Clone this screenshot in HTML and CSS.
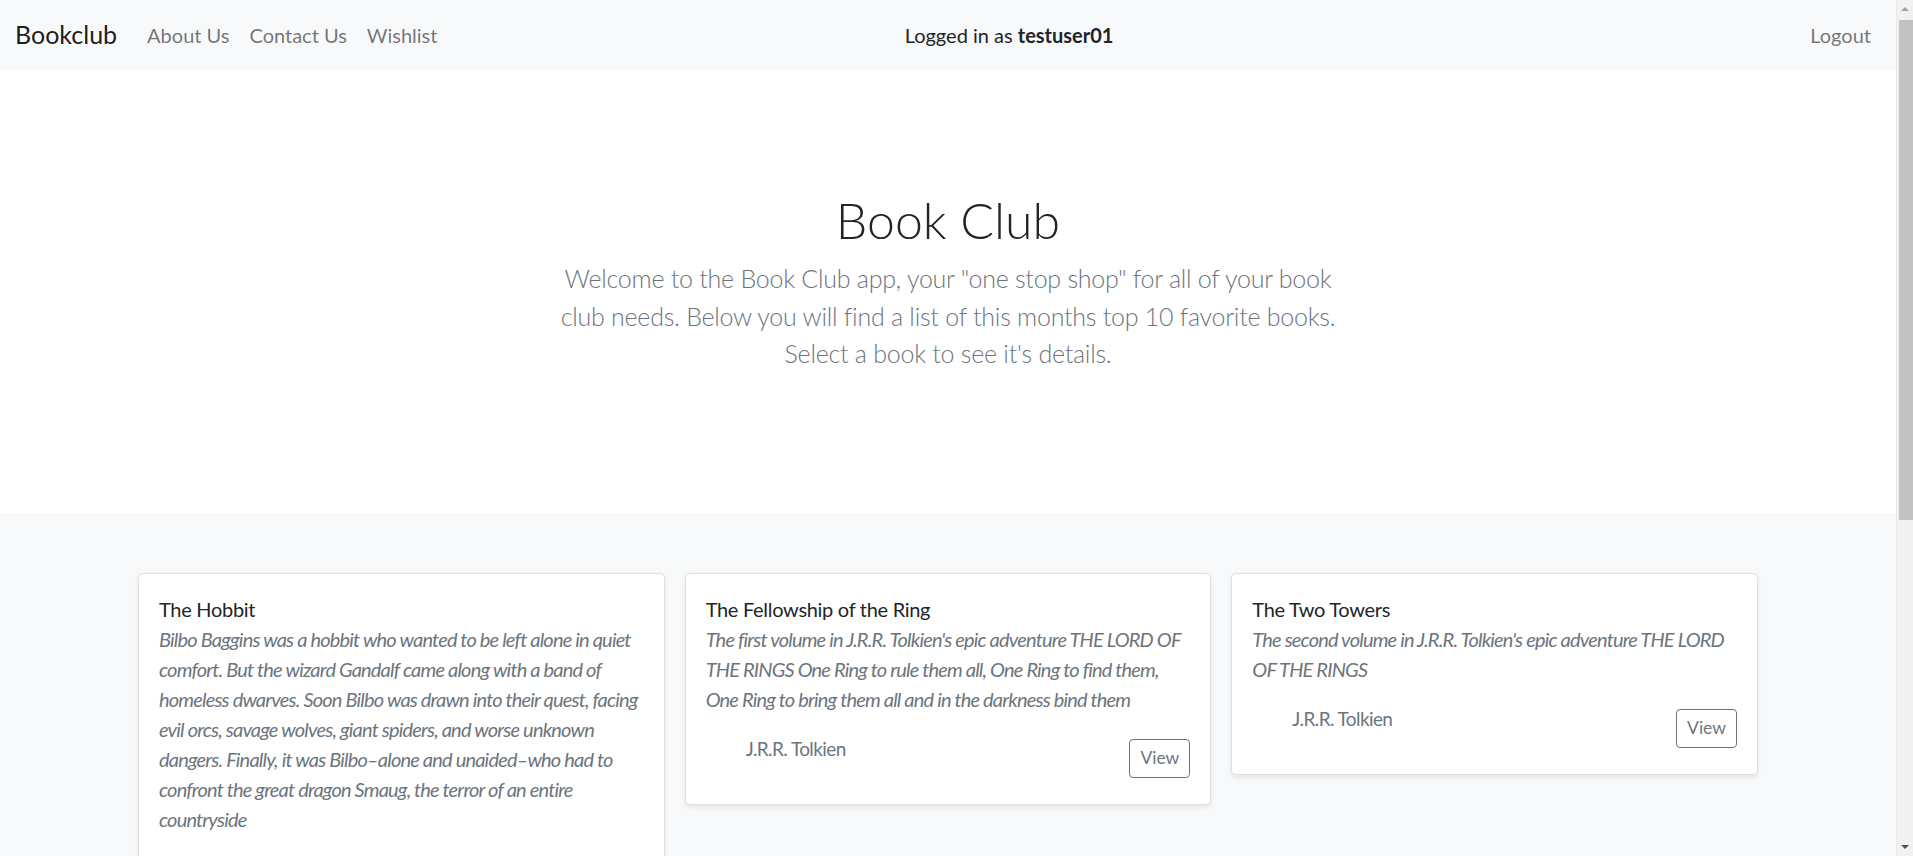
FILE: index.html
```html
<!DOCTYPE html>
<html lang="en">
<head>
<meta charset="utf-8">
<title>Bookclub</title>
<link rel="stylesheet" href="styles.css">
</head>
<body>
<div class="page">
  <nav class="navbar">
    <div class="navbar-inner">
      <a class="brand" href="#">Bookclub</a>
      <div class="collapse">
        <ul class="nav">
          <li><a class="nav-link" href="#">About Us</a></li>
          <li><a class="nav-link" href="#">Contact Us</a></li>
          <li><a class="nav-link" href="#">Wishlist</a></li>
        </ul>
        <span class="navbar-text">Logged in as <b>testuser01</b></span>
        <ul class="nav nav-right">
          <li><a class="nav-link" href="#">Logout</a></li>
        </ul>
      </div>
    </div>
  </nav>

  <section class="hero container">
    <div class="hero-inner">
      <div class="hero-col">
        <h1 class="hero-title">Book Club</h1>
        <p class="lead">Welcome to the Book Club app, your "one stop shop" for all of your book club needs. Below you will find a list of this months top 10 favorite books. Select a book to see it's details.</p>
      </div>
    </div>
  </section>

  <div class="album">
    <div class="container">
      <div class="card-grid">
        <div class="card">
          <div class="card-body">
            <div class="card-title">The Hobbit</div>
            <p class="card-desc">Bilbo Baggins was a hobbit who wanted to be left alone in quiet comfort. But the wizard Gandalf came along with a band of homeless dwarves. Soon Bilbo was drawn into their quest, facing evil orcs, savage wolves, giant spiders, and worse unknown dangers. Finally, it was Bilbo–alone and unaided–who had to confront the great dragon Smaug, the terror of an entire countryside</p>
            <div class="card-foot">
              <ul class="authors"><li>J.R.R. Tolkien</li></ul>
              <button class="btn" type="button">View</button>
            </div>
          </div>
        </div>
        <div class="card">
          <div class="card-body">
            <div class="card-title">The Fellowship of the Ring</div>
            <p class="card-desc">The first volume in J.R.R. Tolkien's epic adventure THE LORD OF THE RINGS One Ring to rule them all, One Ring to find them, One Ring to bring them all and in the darkness bind them</p>
            <div class="card-foot">
              <ul class="authors"><li>J.R.R. Tolkien</li></ul>
              <button class="btn" type="button">View</button>
            </div>
          </div>
        </div>
        <div class="card">
          <div class="card-body">
            <div class="card-title">The Two Towers</div>
            <p class="card-desc">The second volume in J.R.R. Tolkien's epic adventure THE LORD OF THE RINGS</p>
            <div class="card-foot">
              <ul class="authors"><li>J.R.R. Tolkien</li></ul>
              <button class="btn" type="button">View</button>
            </div>
          </div>
        </div>
      </div>
    </div>
  </div>
</div>

<div class="scrollbar" aria-hidden="true">
  <div class="sb-arrow sb-up"></div>
  <div class="sb-thumb"></div>
  <div class="sb-arrow sb-down"></div>
</div>
</body>
</html>
```

FILE: styles.css
```css
html {
  font-size: 20px;
  overflow: hidden;
}
* { box-sizing: border-box; }
body {
  margin: 0;
  font-family: Lato, "Open Sans", "Liberation Sans", sans-serif;
  font-size: 1rem;
  line-height: 1.5;
  color: #212529;
  background: #fff;
}
.page {
  margin-right: 17px;
}
a { text-decoration: none; }
ul { margin: 0; padding: 0; list-style: none; }

/* navbar */
.navbar {
  background: #f8f9fa;
  padding: 0.5rem 0;
}
.navbar-inner {
  display: flex;
  align-items: center;
  padding: 0 0.75rem;
}
.brand {
  font-size: 1.25rem;
  padding: 0.3125rem 0;
  margin-right: 1rem;
  color: rgba(0, 0, 0, 0.9);
  white-space: nowrap;
}
.collapse {
  flex: 1;
  display: grid;
  grid-template-columns: 1fr auto 1fr;
  align-items: center;
}
.nav {
  display: flex;
}
.nav-right {
  justify-self: end;
}
.nav-link {
  display: block;
  padding: 0.5rem;
  color: rgba(0, 0, 0, 0.55);
}
.navbar-text {
  color: #212529;
  padding: 0.5rem 0;
}
.navbar-text b { font-weight: 700; }

/* containers */
.container {
  max-width: 82.5rem;
  margin: 0 auto;
  padding: 0 0.75rem;
}

/* hero */
.hero {
  padding-top: 3rem;
  padding-bottom: 3rem;
  text-align: center;
}
.hero-inner {
  padding: 3rem 0;
  display: flex;
  justify-content: center;
}
.hero-col {
  width: 50%;
  padding: 0 0.75rem;
}
.hero-title {
  font-size: 2.5rem;
  font-weight: 300;
  line-height: 1.2;
  margin: 0 0 0.5rem;
}
.lead {
  font-size: 1.25rem;
  font-weight: 300;
  letter-spacing: -0.25px;
  color: #6c757d;
  margin: 0 0 1rem;
}

/* album */
.album {
  background: #f8f9fa;
  padding: 3rem 0;
}
.card-grid {
  display: grid;
  grid-template-columns: repeat(3, 1fr);
  gap: 1rem;
  align-items: start;
}
.card {
  background: #fff;
  border: 1px solid rgba(0, 0, 0, 0.125);
  border-radius: 0.25rem;
  box-shadow: 0 0.125rem 0.25rem rgba(0, 0, 0, 0.075);
}
.card-body {
  padding: 1rem;
}
.card-title {
  color: #212529;
  letter-spacing: -0.3px;
}
.card-desc {
  margin: 0 0 1rem;
  font-style: italic;
  letter-spacing: -0.82px;
  color: #6c757d;
}
.card-foot {
  display: flex;
  justify-content: space-between;
  align-items: center;
}
.authors {
  padding-left: 2rem;
  margin-bottom: 1rem;
  font-size: 19px;
  line-height: 30px;
  letter-spacing: -0.6px;
  color: #6c757d;
}
.btn {
  font-family: inherit;
  font-size: 0.875rem;
  line-height: 1.5;
  padding: 0.25rem 0.5rem;
  color: #6c757d;
  background: transparent;
  border: 1px solid #6c757d;
  border-radius: 0.2rem;
  cursor: pointer;
}

/* fake classic scrollbar */
.scrollbar {
  position: fixed;
  top: 0;
  right: 0;
  width: 17px;
  height: 100%;
  background: #f1f1f1;
  border-left: 1px solid #e8e8e8;
}
.sb-arrow {
  position: absolute;
  left: 0;
  width: 16px;
  height: 17px;
}
.sb-up { top: 0; }
.sb-down { bottom: 0; }
.sb-up::after,
.sb-down::after {
  content: "";
  position: absolute;
  left: 4px;
  border-left: 4px solid transparent;
  border-right: 4px solid transparent;
}
.sb-up::after {
  top: 7px;
  border-bottom: 4px solid #a3a3a3;
}
.sb-down::after {
  bottom: 7px;
  border-top: 4px solid #505050;
}
.sb-thumb {
  position: absolute;
  top: 20px;
  left: 2px;
  right: 0;
  height: 500px;
  background: #c1c1c1;
}
```
